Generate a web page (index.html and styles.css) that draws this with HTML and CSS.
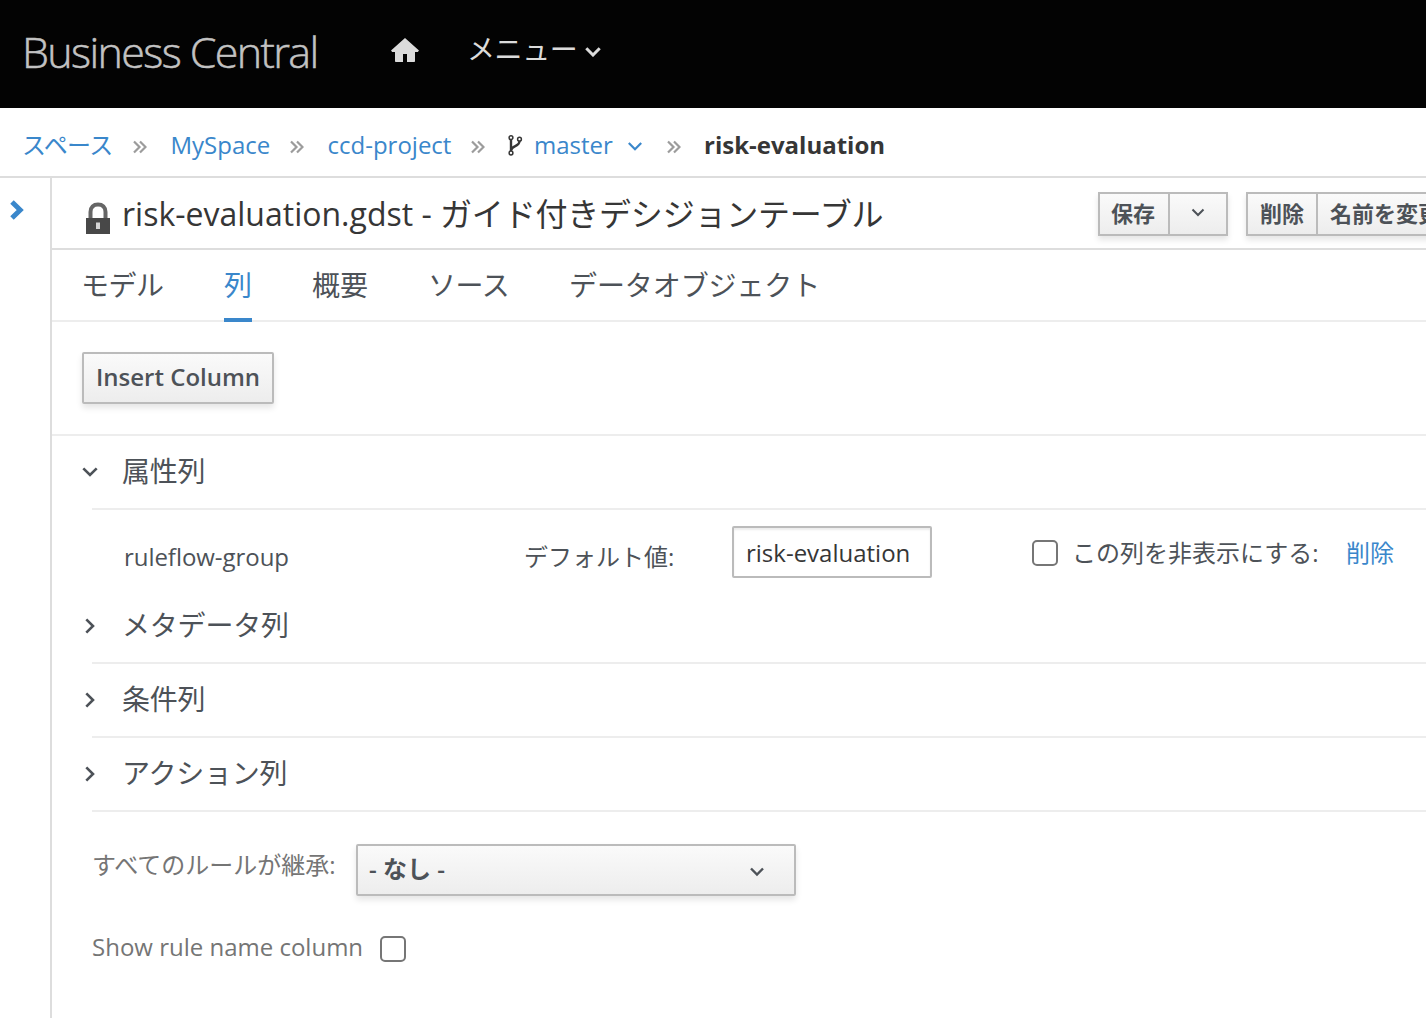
FILE: index.html
```html
<!DOCTYPE html>
<html lang="ja">
<head>
<meta charset="utf-8">
<title>Business Central</title>
<link rel="stylesheet" href="styles.css">
</head>
<body>
<header class="masthead">
  <span class="brand">Business Central</span>
  <svg class="home" width="28" height="25" viewBox="0 0 28 25"><path d="M14 0 28 12.500 26.800 14H24v9.200q0 .8-.8.8H16v-8h-4v8H4.800q-.8 0-.8-.8V14H1.200L0 12.500z"/></svg>
  <span class="menu"><span class="t">メニュー</span></span>
  <svg class="menu-caret" width="16" height="10" viewBox="0 0 16 10"><path d="M1.300 1.300 8 8 14.700 1.300"/></svg>
</header>
<nav class="crumbs">
  <a class="c1"><span class="t">スペース</span></a>
  <svg class="sep" width="14" height="14" viewBox="0 0 14 14"><path d="M1 1.500 6.500 7 1 12.500M7 1.500 12.500 7 7 12.500"/></svg>
  <a class="c2"><span class="t">MySpace</span></a>
  <svg class="sep" width="14" height="14" viewBox="0 0 14 14"><path d="M1 1.500 6.500 7 1 12.500M7 1.500 12.500 7 7 12.500"/></svg>
  <a class="c3"><span class="t">ccd-project</span></a>
  <svg class="sep" width="14" height="14" viewBox="0 0 14 14"><path d="M1 1.500 6.500 7 1 12.500M7 1.500 12.500 7 7 12.500"/></svg>
  <svg class="branch" width="15" height="21" viewBox="0 0 15 21"><circle cx="3" cy="2.700" r="1.900"/><circle cx="3" cy="18" r="1.900"/><circle cx="11.500" cy="4.200" r="1.900"/><path class="stem" d="M3 4.500V16M11.500 6C11.500 12 4 10 3.200 15"/></svg>
  <a class="c4"><span class="t">master</span></a>
  <svg class="branch-caret" width="14" height="9" viewBox="0 0 14 9"><path d="M.8 1 7 7.200 13.200 1"/></svg>
  <svg class="sep" width="14" height="14" viewBox="0 0 14 14"><path d="M1 1.500 6.500 7 1 12.500M7 1.500 12.500 7 7 12.500"/></svg>
  <strong class="c5"><span class="t">risk-evaluation</span></strong>
</nav>
<div class="workspace">
  <aside class="rail"><svg width="14" height="20" viewBox="0 0 14 20"><path d="M2 2 10.200 10 2 18"/></svg></aside>
  <main class="editor">
    <div class="titlebar">
      <svg class="lock" width="26" height="33" viewBox="0 0 26 33"><path class="shackle" d="M5.500 16V10C5.500 5 8.500 2.500 13 2.500s7.500 2.500 7.500 7.500V16"/><path class="body" d="M1 16h24v16H1z"/><path class="key" d="M11 20.500h4v6.500h-4z"/></svg>
      <h1>risk-evaluation.gdst - <span class="kind">ガイド付きデシジョンテーブル</span></h1>
      <div class="actions">
        <div class="group"><button class="save">保存</button><button class="more"><svg width="14" height="9" viewBox="0 0 14 9"><path d="M1.500 1.500 7 7 12.500 1.500"/></svg></button></div>
        <div class="group"><button class="delete">削除</button><button class="rename">名前を変更</button></div>
      </div>
    </div>
    <div class="tabs">
      <a class="kana">モデル</a><a class="active">列</a><a>概要</a><a class="kana">ソース</a><a class="last">データオブジェクト</a>
    </div>
    <div class="toolbar"><button class="insert"><span class="t">Insert Column</span></button></div>
    <section class="fold open"><svg width="16" height="10" viewBox="0 0 16 10"><path d="M1.300 1.300 8 8 14.700 1.300"/></svg><h2>属性列</h2></section>
    <div class="attribute">
      <span class="name"><span class="t">ruleflow-group</span></span>
      <span class="label"><span class="t">デフォルト値:</span></span>
      <span class="field"><span class="t">risk-evaluation</span></span>
      <span class="check"></span>
      <span class="hide"><span class="t">この列を非表示にする:</span></span>
      <a class="remove">削除</a>
    </div>
    <section class="fold"><svg width="10" height="16" viewBox="0 0 10 16"><path d="M1.300 1.300 8 8 1.300 14.700"/></svg><h2>メタデータ列</h2></section>
    <section class="fold"><svg width="10" height="16" viewBox="0 0 10 16"><path d="M1.300 1.300 8 8 1.300 14.700"/></svg><h2>条件列</h2></section>
    <section class="fold"><svg width="10" height="16" viewBox="0 0 10 16"><path d="M1.300 1.300 8 8 1.300 14.700"/></svg><h2>アクション列</h2></section>
    <div class="inherit">
      <span class="inherit-label"><span class="t">すべてのルールが継承:</span></span>
      <div class="select"><span class="t">- なし -</span><svg width="16" height="10" viewBox="0 0 16 10"><path d="M2 1.500 8 7.500 14 1.500"/></svg></div>
    </div>
    <div class="show-name"><span class="show-label"><span class="t">Show rule name column</span></span><span class="check"></span></div>
  </main>
</div>
</body>
</html>
```
FILE: styles.css
```css
* { box-sizing: border-box; }
body { margin: 0; width: 1426px; height: 1018px; overflow: hidden; background: #fff; color: #4d5258; font: 24px/32px "Open Sans", "Noto Sans CJK JP", sans-serif; }
svg { display: block; flex: none; fill: none; stroke: currentColor; stroke-width: 2.6; }
a { color: #3a87cb; }
.t { display: inline-block; white-space: nowrap; }
h1, h2 { margin: 0; font-weight: 400; white-space: nowrap; }
button { font: 600 22px/30px "Open Sans", "Noto Sans CJK JP", sans-serif; color: #4d5258; border: 2px solid #bbb; background: linear-gradient(#fafafa, #ededed); padding: 0; margin: 0; white-space: nowrap; text-align: left; }

.masthead { display: flex; height: 108px; background: #030303; color: #dbdbdb; align-items: flex-start; }
.brand { flex: none; width: 366px; padding: 22px 0 0 22px; font-size: 43px; line-height: 60px; font-weight: 300; letter-spacing: -1.63px; color: #c2c2c2; -webkit-text-stroke: .5px #c2c2c2; white-space: nowrap; }
.home { margin: 38px 0 0 25px; fill: #dbdbdb; stroke: none; }
.menu { width: 118px; margin: 29px 0 0 48px; font-size: 28px; line-height: 40px; letter-spacing: -.4px; white-space: nowrap; }
.menu-caret { margin-top: 47px; stroke-width: 3; }

.crumbs { display: flex; height: 70px; border-bottom: 2px solid #ddd; padding: 0 0 0 22px; }
.crumbs a, .crumbs strong { flex: none; padding-top: 21px; }
.crumbs strong { color: #363636; font-weight: 700; }
.sep { margin-top: 32px; color: #9c9c9c; stroke-width: 2.2; }
.c1 { width: 111px; letter-spacing: -.6px; }
.c2 { width: 119.5px; margin-left: 23.5px; }
.c3 { width: 143px; margin-left: 23.5px; }
.branch { margin: 27px 0 0 23px; color: #363636; stroke-width: 1.5; }
.branch .stem { stroke-width: 2.4; }
.c4 { width: 94px; margin-left: 11.5px; }
.branch-caret { margin: 34px 24.5px 0 0; color: #3a87cb; stroke-width: 2.2; }
.c5 { margin-left: 23.5px; }

.workspace { display: flex; height: 840px; }
.rail { width: 52px; border-right: 2px solid #ddd; padding: 22px 0 0 10px; color: #3a87cb; flex: none; }
.rail svg { stroke-width: 5; }
.editor { flex: 1; min-width: 0; }
.titlebar { display: flex; height: 72px; border-bottom: 2px solid #ddd; padding-left: 33px; color: #363636; }
.lock { margin-top: 24px; }
.lock .shackle { stroke: #666; stroke-width: 4; }
.lock .body { fill: #484848; stroke: none; }
.lock .key { fill: #d5d5d5; stroke: none; }
h1 { width: 976px; margin-left: 11px; padding-top: 14px; font-size: 32px; line-height: 44px; flex: none; }
.kind { letter-spacing: -.2px; }
.actions { display: flex; gap: 18px; padding-top: 14px; }
.group { display: flex; flex: none; height: 44px; box-shadow: 0 4px 6px rgba(0,0,0,.1); }
.group button { height: 44px; padding: 0 0 3px 12px; flex: none; }
.group .save { padding-left: 11px; }
.group button + button { margin-left: -2px; }
.save, .delete { width: 72px; }
.group .more { width: 60px; display: flex; padding: 14px 0 0 21px; }
.more svg { stroke-width: 2; }
.rename { width: 140px; }

.tabs { display: flex; gap: 60px; height: 72px; padding-left: 29px; border-bottom: 2px solid #ededed; font-size: 28px; line-height: 40px; }
.tabs a { color: #4d5258; height: 72px; padding-top: 15px; flex: none; white-space: nowrap; }
.tabs .kana { width: 83px; letter-spacing: -.5px; }
.tabs .kana + .last { margin-left: -2px; letter-spacing: -.1px; }
.tabs .active { color: #3a87cb; border-bottom: 4px solid #3a87cb; }
.toolbar { height: 114px; padding: 30px; border-bottom: 2px solid #ededed; }
.insert { width: 192px; height: 52px; font-size: 24px; border-radius: 2px; box-shadow: 0 4px 6px rgba(0,0,0,.1); display: flex; padding: 8px 0 0 12px; }
.fold { display: flex; height: 74px; margin-left: 40px; border-bottom: 2px solid #ededed; }
.fold svg { margin: 27.5px 0 0 -7.5px; }
.fold.open svg { margin: 31px 0 0 -10px; }
.fold h2 { font-size: 28px; line-height: 40px; padding-top: 15px; margin-left: 27.5px; letter-spacing: -.2px; }
.fold.open h2 { margin-left: 24px; }
.attribute { display: flex; height: 80px; padding-left: 72px; }
.name { width: 400px; padding-top: 31px; letter-spacing: -.05px; flex: none; }
.label { width: 208px; padding-top: 31px; flex: none; }
.field { width: 200px; height: 52px; margin-top: 16px; border: 2px solid #bbb; border-radius: 2px; box-shadow: inset 0 2px 2px rgba(0,0,0,.08); color: #363636; padding: 9px 0 0 12px; flex: none; }
.check { flex: none; width: 26px; height: 26px; border: 2px solid #767676; border-radius: 5px; }
.attribute .check { margin: 30px 0 0 100px; }
.hide { width: 274px; margin-left: 14px; padding-top: 27px; flex: none; }
.remove { padding-top: 27px; white-space: nowrap; }
.inherit { display: flex; padding: 32px 0 0 40px; height: 84px; color: #757575; }
.inherit-label { width: 264px; padding-top: 5px; }
.select { display: flex; justify-content: space-between; width: 440px; height: 52px; border: 2px solid #bbb; border-radius: 2px; background: linear-gradient(#fafafa, #ededed); box-shadow: 0 4px 6px rgba(0,0,0,.1); color: #4d5258; font-weight: 600; padding: 7px 29px 0 11px; }
.select svg { margin-top: 14px; stroke-width: 2.4; }
.show-name { display: flex; padding: 40px 0 0 40px; color: #757575; }
.show-label { width: 288px; margin-top: -5px; }
```
